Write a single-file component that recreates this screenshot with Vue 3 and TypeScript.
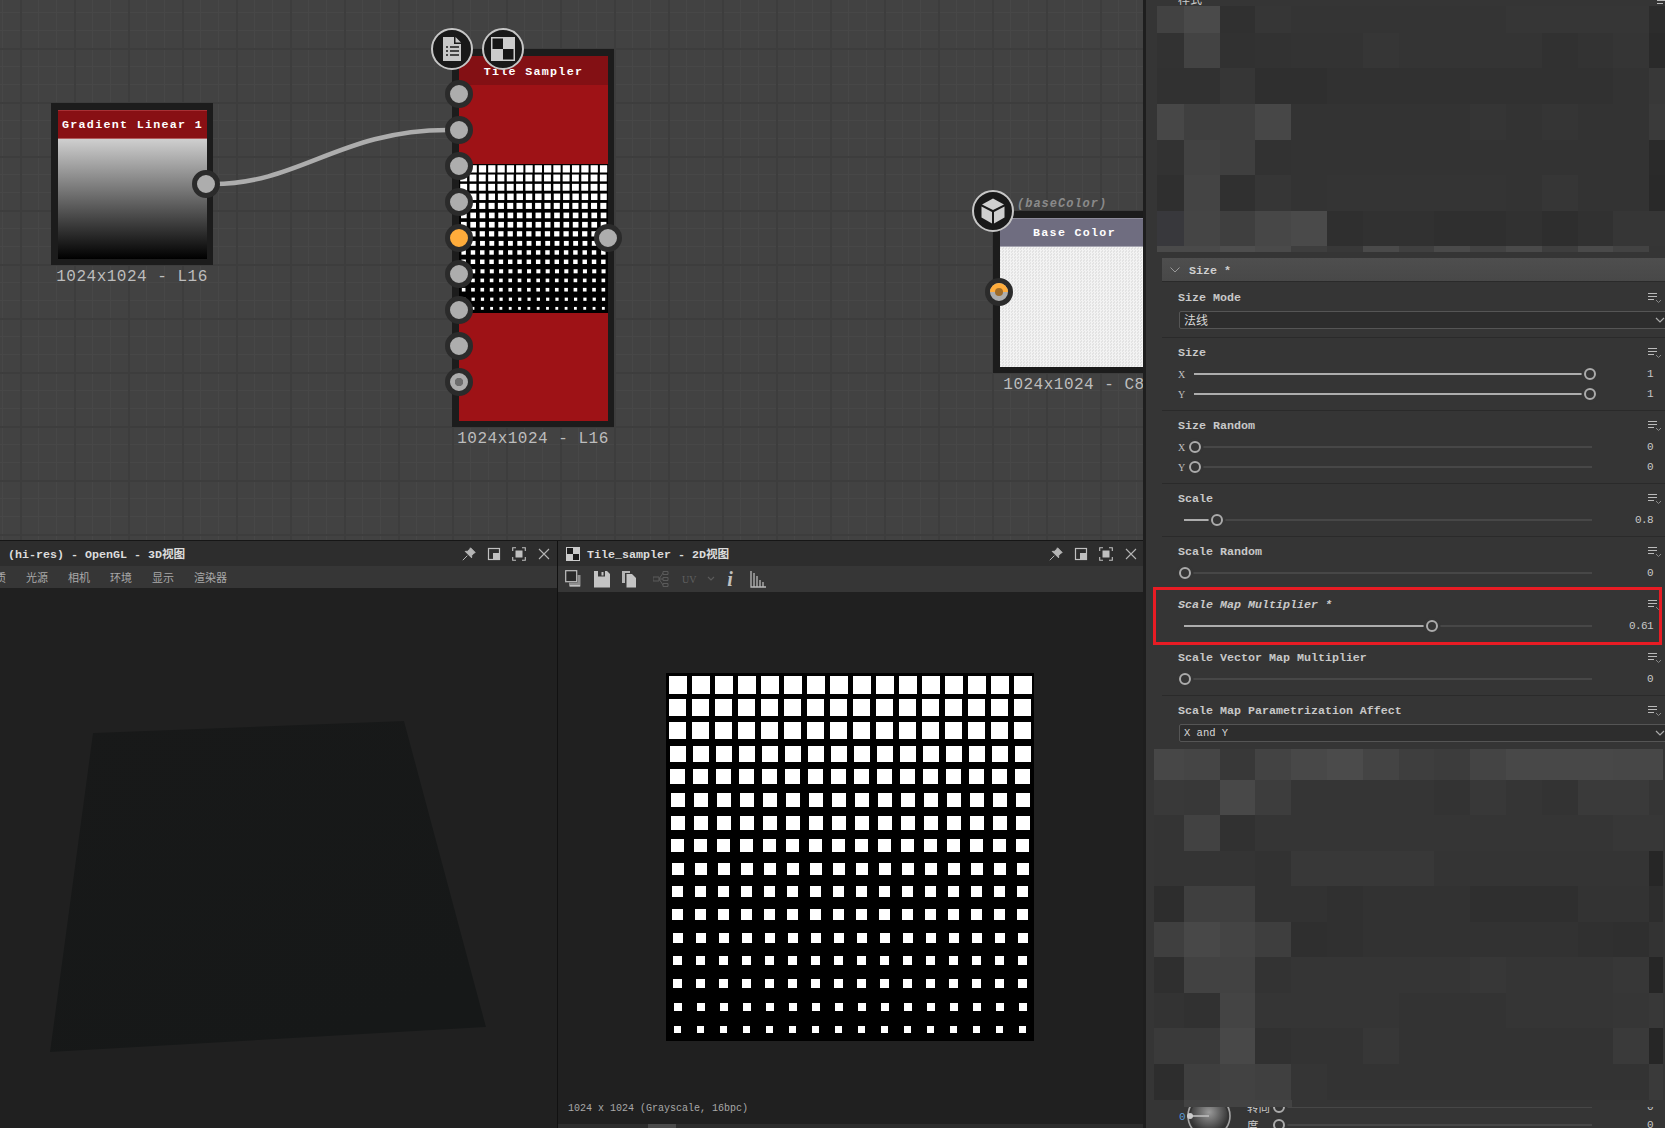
<script setup lang="ts">
interface Tile { x: number; y: number; s: number }
const tiles: Tile[] = []
for (let r = 0; r < 16; r++) {
  const s = Math.round(18 - r * 0.73)
  for (let c = 0; c < 16; c++) {
    tiles.push({ x: Math.round(c * 23 + 11.5 - s / 2), y: Math.round(r * 23 + 11.5 - s / 2), s })
  }
}

const pinYs = [45, 81, 117, 153, 189, 225, 261, 297, 333]

type Ctl =
  | { kind: 'drop'; text: string }
  | { kind: 'slider'; axis?: string; pct: number; val: string }

interface Group { label: string; italic?: boolean; cls?: string; ctl: Ctl[]; boxed?: boolean }

const groups: Group[] = [
  { label: 'Size Mode', cls: 'g-drop', ctl: [{ kind: 'drop', text: '法线' }] },
  { label: 'Size', ctl: [{ kind: 'slider', axis: 'X', pct: 100, val: '1' }, { kind: 'slider', axis: 'Y', pct: 100, val: '1' }] },
  { label: 'Size Random', ctl: [{ kind: 'slider', axis: 'X', pct: 0, val: '0' }, { kind: 'slider', axis: 'Y', pct: 0, val: '0' }] },
  { label: 'Scale', ctl: [{ kind: 'slider', pct: 8, val: '0.8' }] },
  { label: 'Scale Random', cls: 'g-open', ctl: [{ kind: 'slider', pct: 0, val: '0' }] },
  { label: 'Scale Map Multiplier *', italic: true, cls: 'g-open', boxed: true, ctl: [{ kind: 'slider', pct: 61, val: '0.61' }] },
  { label: 'Scale Vector Map Multiplier', ctl: [{ kind: 'slider', pct: 0, val: '0' }] },
  { label: 'Scale Map Parametrization Affect', cls: 'g-last', ctl: [{ kind: 'drop', text: 'X and Y' }] }
]

const m1Rows: string[][] = [
  ['#424242', '#4a4a4a', '#303030', '#363636', '#343434', '#343434', '#343434', '#343434', '#343434', '#343434', '#363636', '#363636', '#363636', '#363636', '#2c2c2c'],
  ['#323232', '#434343', '#313131', '#323232', '#333333', '#333333', '#363636', '#343434', '#343434', '#343434', '#343434', '#313131', '#333333', '#353535', '#2a2a2a'],
  ['#313131', '#313131', '#363636', '#2f2f2f', '#2f2f2f', '#313131', '#313131', '#313131', '#313131', '#313131', '#313131', '#313131', '#313131', '#333333', '#383838'],
  ['#474747', '#3f3f3f', '#3f3f3f', '#474747', '#333333', '#333333', '#333333', '#333333', '#333333', '#353535', '#333333', '#353535', '#333333', '#333333', '#3a3a3a'],
  ['#323232', '#424242', '#3f3f3f', '#323232', '#333333', '#333333', '#333333', '#333333', '#333333', '#333333', '#333333', '#333333', '#333333', '#333333', '#2a2a2a'],
  ['#2f2f2f', '#444444', '#303030', '#363636', '#333333', '#343434', '#343434', '#343434', '#343434', '#343434', '#333333', '#363636', '#333333', '#333333', '#292929'],
  ['#38383c', '#454545', '#3f3f3f', '#474747', '#4a4a4a', '#2f2f2f', '#313131', '#313131', '#2f2f2f', '#2f2f2f', '#313131', '#2e2e2e', '#313131', '#363636', '#363636'],
  ['#4a4a4a', '#4a4a4a', '#4e4e4e', '#4a4a4a', '#3e3e3e', '#383838', '#4a4a4a', '#404040', '#4a4a4a', '#434343', '#4a4a4a', '#3e3e3e', '#4a4a4a', '#434343', '#353535']
]

const m2Rows: string[][] = [
  ['#474747', '#454545', '#383838', '#434343', '#484848', '#4b4b4b', '#444444', '#3e3e3e', '#3c3c3c', '#444444', '#484848', '#484848', '#484848', '#474747', '#474747'],
  ['#393939', '#383838', '#484848', '#3d3d3d', '#353535', '#353535', '#353535', '#353535', '#333333', '#383838', '#353535', '#333333', '#3a3a3a', '#3a3a3a', '#353535'],
  ['#343434', '#424242', '#313131', '#353535', '#353535', '#353535', '#353535', '#353535', '#353535', '#353535', '#353535', '#353535', '#353535', '#373737', '#373737'],
  ['#343434', '#343434', '#343434', '#323232', '#383838', '#383838', '#383838', '#383838', '#343434', '#343434', '#343434', '#343434', '#343434', '#343434', '#262626'],
  ['#2d2d2d', '#3f3f3f', '#3f3f3f', '#323232', '#323232', '#303030', '#323232', '#323232', '#323232', '#2f2f2f', '#2f2f2f', '#2f2f2f', '#333333', '#333333', '#2d2d2d'],
  ['#3f3f3f', '#484848', '#444444', '#3e3e3e', '#2f2f2f', '#303030', '#323232', '#323232', '#323232', '#323232', '#323232', '#323232', '#303030', '#2f2f2f', '#333333'],
  ['#2f2f2f', '#424242', '#424242', '#333333', '#353535', '#353535', '#353535', '#353535', '#353535', '#373737', '#353535', '#353535', '#353535', '#373737', '#262626'],
  ['#333333', '#313131', '#444444', '#353535', '#353535', '#353535', '#353535', '#333333', '#333333', '#333333', '#353535', '#353535', '#353535', '#363636', '#383838'],
  ['#3a3a3a', '#3a3a3a', '#484848', '#313131', '#333333', '#333333', '#373737', '#333333', '#333333', '#333333', '#333333', '#333333', '#333333', '#3a3a3a', '#262626'],
  ['#2d2d2d', '#3f3f3f', '#424242', '#404040', '#353535', '#333333', '#333333', '#333333', '#333333', '#333333', '#333333', '#333333', '#333333', '#333333', '#3a3a3a']
]

const flat = (rows: string[][]): string[] => rows.reduce<string[]>((a, r) => a.concat(r), [])
const m1 = flat(m1Rows)
const m2 = flat(m2Rows)
</script>

<template>
  <div class="app">
    <div class="left">
      <div class="graph">
        <svg class="wire" width="1143" height="540" viewBox="0 0 1143 540">
          <path d="M213 184 C 300 184, 340 130, 448 130" fill="none" stroke="#adadad" stroke-width="4.5" />
        </svg>

        <div class="node n-grad">
          <div class="box">
            <div class="head head-red">Gradient Linear 1</div>
            <div class="body body-grad"></div>
          </div>
          <div class="caption">1024x1024 - L16</div>
          <span class="pin out-grad"></span>
        </div>

        <div class="node n-tile">
          <div class="box">
            <div class="head head-dark">Tile Sampler</div>
            <div class="red r-top"></div>
            <svg class="tile-small" viewBox="0 0 368 368" preserveAspectRatio="none">
              <rect width="368" height="368" fill="#000" />
              <rect v-for="(t, i) in tiles" :key="i" :x="t.x" :y="t.y" :width="t.s" :height="t.s" fill="#fff" />
            </svg>
            <div class="red r-bot"></div>
          </div>
          <div class="caption">1024x1024 - L16</div>
          <span
            v-for="(y, i) in pinYs"
            :key="i"
            class="pin in-pin"
            :class="{ orange: i === 4, dotted: i === 8 }"
            :style="{ top: y + 'px' }"
          ></span>
          <span class="pin out-tile"></span>
          <span class="badge b-doc">
            <svg width="24" height="26" viewBox="0 0 24 26">
              <path d="M3 1 H14 V8 H21 V25 H3 Z" fill="#c8c8c8" />
              <path d="M15.5 1 L21 6.6 H15.5 Z" fill="#c8c8c8" />
              <path d="M6 11 H8 M10 11 H19 M6 15 H8 M10 15 H19 M6 19 H8 M10 19 H19" stroke="#1a1a1a" stroke-width="1.6" />
            </svg>
          </span>
          <span class="badge b-check">
            <svg width="24" height="24" viewBox="0 0 24 24">
              <rect width="24" height="24" fill="#cccccc" />
              <rect x="1.5" y="1.5" width="10.5" height="10.5" fill="#161616" />
              <rect x="12" y="12" width="10.5" height="10.5" fill="#161616" />
            </svg>
          </span>
        </div>

        <div class="node n-base">
          <div class="box">
            <div class="head head-base">Base Color</div>
            <div class="body body-base"></div>
          </div>
          <div class="caption">1024x1024 - C8</div>
          <span class="io-label">(baseColor)</span>
          <span class="pin in-base"><i class="half"></i><i class="core"></i></span>
          <span class="badge b-cube">
            <svg width="26" height="28" viewBox="0 0 26 28">
              <path d="M13 1.5 L24 7.5 L13 13 L2 7.5 Z" fill="#cfcfcf" />
              <path d="M1.5 9.5 L12 15 V26.5 L1.5 20.5 Z" fill="#cfcfcf" />
              <path d="M24.5 9.5 L14 15 V26.5 L24.5 20.5 Z" fill="#cfcfcf" />
            </svg>
          </span>
        </div>
      </div>

      <div class="bottom">
        <section class="view view-3d">
          <header class="title-bar">
            <span class="title t3d">(hi-res) - OpenGL - 3D视图</span>
            <div class="win-btns">
              <svg class="wb" viewBox="0 0 14 14"><path d="M8.5 .8 L13.2 5.5 L11.8 6.2 L9.7 8.6 L9.6 10.8 L3.2 4.4 L5.4 4.3 L7.8 2.2 Z M5.3 8.7 L.8 13.2" fill="#b5b5b5" stroke="#b5b5b5" stroke-width="1" /></svg>
              <svg class="wb" viewBox="0 0 14 14"><rect x="1.5" y="1.5" width="11" height="11" fill="none" stroke="#c0c0c0" stroke-width="1.2" /><rect x="6" y="6" width="6.5" height="6.5" fill="#c0c0c0" /></svg>
              <svg class="wb" viewBox="0 0 14 14"><path d="M.7 4 V.7 H4 M10 .7 H13.3 V4 M13.3 10 V13.3 H10 M4 13.3 H.7 V10" fill="none" stroke="#c0c0c0" stroke-width="1.1" /><rect x="3.5" y="3.5" width="7" height="7" fill="#c0c0c0" /></svg>
              <svg class="wb" viewBox="0 0 14 14"><path d="M2 2 L12 12 M12 2 L2 12" stroke="#b5b5b5" stroke-width="1.1" /></svg>
            </div>
          </header>
          <nav class="menu">
            <span>质</span><span>光源</span><span>相机</span><span>环境</span><span>显示</span><span>渲染器</span>
          </nav>
          <div class="stage">
            <svg width="557" height="536" viewBox="0 0 557 536">
              <defs>
                <linearGradient id="quad" x1="0" y1="0" x2="0.6" y2="1">
                  <stop offset="0" stop-color="#181919" />
                  <stop offset="1" stop-color="#161818" />
                </linearGradient>
              </defs>
              <polygon points="93,145 404,133 486,439 50,464" fill="url(#quad)" />
            </svg>
          </div>
        </section>

        <section class="view view-2d">
          <header class="title-bar">
            <svg class="t-icon" width="14" height="14" viewBox="0 0 14 14">
              <rect width="14" height="14" fill="#cccccc" />
              <rect x="1" y="1" width="6" height="6" fill="#1c1c1c" />
              <rect x="7" y="7" width="6" height="6" fill="#1c1c1c" />
            </svg>
            <span class="title">Tile_sampler - 2D视图</span>
            <div class="win-btns w2">
              <svg class="wb" viewBox="0 0 14 14"><path d="M8.5 .8 L13.2 5.5 L11.8 6.2 L9.7 8.6 L9.6 10.8 L3.2 4.4 L5.4 4.3 L7.8 2.2 Z M5.3 8.7 L.8 13.2" fill="#b5b5b5" stroke="#b5b5b5" stroke-width="1" /></svg>
              <svg class="wb" viewBox="0 0 14 14"><rect x="1.5" y="1.5" width="11" height="11" fill="none" stroke="#c0c0c0" stroke-width="1.2" /><rect x="6" y="6" width="6.5" height="6.5" fill="#c0c0c0" /></svg>
              <svg class="wb" viewBox="0 0 14 14"><path d="M.7 4 V.7 H4 M10 .7 H13.3 V4 M13.3 10 V13.3 H10 M4 13.3 H.7 V10" fill="none" stroke="#c0c0c0" stroke-width="1.1" /><rect x="3.5" y="3.5" width="7" height="7" fill="#c0c0c0" /></svg>
              <svg class="wb" viewBox="0 0 14 14"><path d="M2 2 L12 12 M12 2 L2 12" stroke="#b5b5b5" stroke-width="1.1" /></svg>
            </div>
          </header>
          <div class="tools">
            <svg class="ti" viewBox="0 0 16 18"><rect x=".7" y=".7" width="11" height="11" fill="#2a2a2a" stroke="#c0c0c0" stroke-width="1.2" /><path d="M12.5 5 H15.5 V16.5 H4 V12.5 H12.5 Z" fill="#8e8e8e" /><path d="M5 15 H15 V16.5 H5 Z" fill="#c0c0c0" /></svg>
            <svg class="ti" viewBox="0 0 16 18"><path d="M0 1 H13 L16 4 V17.5 H0 Z" fill="#c4c4c4" /><rect x="4" y="1" width="7" height="5.5" fill="#363636" /><rect x="7.5" y="2" width="2" height="3.5" fill="#c4c4c4" /></svg>
            <svg class="ti" viewBox="0 0 16 18"><path d="M0 1 H8 V3 H3 V13 H0 Z" fill="#b4b4b4" /><path d="M4.5 4 H10 L14 8 V17.5 H4.5 Z" fill="#c4c4c4" /></svg>
            <svg class="ti dim" viewBox="0 0 16 18"><path d="M0 7 H6 V11 H0 Z M10 1.5 H15 V4.5 H10 Z M10 7.5 H15 V10.5 H10 Z M10 13.5 H15 V16.5 H10 Z" fill="none" stroke="#5a5a5a" /><path d="M6 9 L10 3 M6 9 H10 M6 9 L10 15" stroke="#5a5a5a" /></svg>
            <span class="uv">UV</span>
            <svg class="chev" width="10" height="18" viewBox="0 0 10 18"><path d="M2 7 L5 10 L8 7" fill="none" stroke="#5a5a5a" stroke-width="1.2" /></svg>
            <span class="info">i</span>
            <svg class="ti hist" viewBox="0 0 16 18"><path d="M1 1 V17 H16 M4 3 V17 M7 6 V17 M10 10 V17 M13 12 V17" fill="none" stroke="#b8b8b8" stroke-width="1.3" /></svg>
          </div>
          <div class="canvas2d">
            <svg class="tile-big" width="368" height="368" viewBox="0 0 368 368" shape-rendering="crispEdges">
              <rect width="368" height="368" fill="#000" />
              <rect v-for="(t, i) in tiles" :key="i" :x="t.x" :y="t.y" :width="t.s" :height="t.s" fill="#fff" />
            </svg>
            <div class="status">1024 x 1024 (Grayscale, 16bpc)</div>
          </div>
          <div class="hbar"><span></span></div>
        </section>
      </div>
    </div>

    <aside class="panel">
      <div class="stub">
        <span class="stub-text">样式</span>
        <svg class="menu-ic stub-ic" width="14" height="12" viewBox="0 0 14 12"><path d="M0 1.5 H9 M0 4.5 H9 M0 7.5 H6" stroke="#bbb" /><path d="M8 8 L10.5 10.5 L13 8" fill="none" stroke="#888" /></svg>
      </div>

      <div class="mosaic m-top">
        <i v-for="(c, i) in m1" :key="i" :style="{ background: c }"></i>
      </div>

      <div class="sec-head">
        <svg width="12" height="8" viewBox="0 0 12 8"><path d="M1.5 1.5 L6 6 L10.5 1.5" fill="none" stroke="#999" stroke-width="1" /></svg>
        <span>Size *</span>
      </div>

      <div v-for="g in groups" :key="g.label" class="group" :class="g.cls">
        <div class="g-label">
          <span :class="{ ital: g.italic }">{{ g.label }}</span>
          <svg class="menu-ic" width="14" height="12" viewBox="0 0 14 12"><path d="M0 1.5 H9 M0 4.5 H9 M0 7.5 H6" stroke="#bbb" /><path d="M8 8 L10.5 10.5 L13 8" fill="none" stroke="#888" /></svg>
        </div>
        <template v-for="(c, i) in g.ctl" :key="i">
          <div v-if="c.kind === 'drop'" class="drop">
            <span>{{ c.text }}</span>
            <svg width="10" height="7" viewBox="0 0 10 7"><path d="M1 1 L5 5 L9 1" fill="none" stroke="#aaa" stroke-width="1.2" /></svg>
          </div>
          <div v-else class="slide" :class="{ plain: !c.axis }">
            <span v-if="c.axis" class="axis">{{ c.axis }}</span>
            <div class="track">
              <b class="fill" :style="{ width: c.pct + '%' }"></b>
              <div class="thumb-lane"><em class="thumb" :style="{ left: c.pct + '%' }"></em></div>
            </div>
            <span class="val">{{ c.val }}</span>
          </div>
        </template>
        <div v-if="g.boxed" class="red-box"></div>
      </div>

      <div class="mosaic m-bot">
        <i v-for="(c, i) in m2" :key="i" :style="{ background: c }"></i>
      </div>

      <div class="tail">
        <div class="tail-mask"><i></i><i></i><i></i></div>
        <span class="zero">0</span>
        <svg class="knob" width="52" height="44" viewBox="0 0 52 44">
          <defs>
            <radialGradient id="ball" cx="50%" cy="40%" r="55%">
              <stop offset="0" stop-color="#9a9a9a" />
              <stop offset="1" stop-color="#333333" />
            </radialGradient>
          </defs>
          <circle cx="26" cy="16" r="18.5" fill="url(#ball)" />
          <circle cx="26" cy="16" r="21" fill="none" stroke="#a5a5a5" stroke-width="1.6" />
          <path d="M7 16 H26" stroke="#bdbdbd" stroke-width="1.6" />
          <circle cx="7" cy="16" r="3" fill="#cccccc" />
        </svg>
        <div class="tail-rows">
          <div class="t-row"><span class="t-lab">转向</span><div class="t-track"><em></em></div><span class="val">0</span></div>
          <div class="t-row"><span class="t-lab">度</span><div class="t-track"><em></em></div><span class="val">0</span></div>
        </div>
      </div>
    </aside>
  </div>
</template>

<style scoped>
.app {
  width: 1665px;
  height: 1128px;
  display: flex;
  overflow: hidden;
  background: #1e1e1e;
  font-family: "Liberation Mono", "Noto Sans CJK SC", monospace;
  color: #ccc;
}
.left { width: 1143px; flex: none; display: flex; flex-direction: column; }

.graph {
  height: 540px;
  flex: none;
  position: relative;
  overflow: hidden;
  background-color: #424242;
  background-image:
    linear-gradient(to right, #3d3d3d 2px, transparent 2px),
    linear-gradient(to bottom, #3d3d3d 2px, transparent 2px),
    linear-gradient(to right, #474747 1px, transparent 1px),
    linear-gradient(to bottom, #474747 1px, transparent 1px);
  background-size: 54px 54px, 54px 54px, 18px 18px, 18px 18px;
  background-position: 20px 0, 0 48px, 2px 0, 0 12px;
}
.wire { position: absolute; left: 0; top: 0; }

.node { position: absolute; width: 162px; }
.n-grad { left: 51px; top: 103px; }
.n-tile { left: 452px; top: 49px; }
.n-base { left: 993px; top: 211px; }
.box {
  border: 7px solid #1c1c1c;
  border-right-width: 6px;
  border-bottom-width: 6px;
  display: flex;
  flex-direction: column;
}
.head {
  height: 29px;
  flex: none;
  display: flex;
  align-items: center;
  justify-content: center;
  color: #fff;
  font-size: 11.67px;
  font-weight: 700;
  letter-spacing: 1.3px;
  white-space: nowrap;
}
.head-red { background: #881014; border-top: 1px solid #a83034; border-bottom: 1px solid #b05a5c; box-sizing: border-box; }
.head-dark { background: #831014; padding-top: 3px; box-sizing: border-box; }
.head-base { background: #6f6d80; border-top: 1px solid #8d8c9b; border-bottom: 1px solid #a5a4b0; box-sizing: border-box; padding-top: 1px; }
.body { height: 120px; }
.body-grad { background: linear-gradient(#cfcfcf, #000); }
.body-base {
  background-color: #ececec;
  background-image: repeating-conic-gradient(#f3f3f3 0 25%, #e3e3e3 0 50%);
  background-size: 3px 3px;
}
.red { background: #9e1216; }
.r-top { height: 79px; }
.r-bot { height: 108px; }
.tile-small { display: block; width: 149px; height: 149px; }
.caption {
  text-align: center;
  font-size: 16px;
  letter-spacing: .5px;
  color: #bdbdbd;
  line-height: 20px;
  padding-top: 2px;
  white-space: nowrap;
}
.pin {
  position: absolute;
  width: 18px;
  height: 18px;
  border-radius: 50%;
  background: #adadad;
  border: 5px solid #2b2b2b;
  transform: translate(-50%, -50%);
}
.in-pin { left: 7px; }
.out-grad { left: 155px; top: 81px; }
.out-tile { left: 156px; top: 189px; }
.orange { background: #ffac3b; }
.dotted { background: radial-gradient(circle, #6e6e6e 0 4px, #adadad 4.5px); }
.in-base { left: 6px; top: 81px; overflow: hidden; }
.half { position: absolute; left: 0; right: 0; top: 0; height: 9px; background: #ffac3b; }
.core {
  position: absolute;
  left: 5px;
  top: 5px;
  width: 8px;
  height: 8px;
  border-radius: 50%;
  background: #a06c28;
}
.badge {
  position: absolute;
  width: 38px;
  height: 38px;
  border-radius: 50%;
  background: #191919;
  border: 2.5px solid #c6c6c6;
  display: flex;
  align-items: center;
  justify-content: center;
  transform: translate(-50%, -50%);
}
.b-doc { left: 0; top: 0; }
.b-check { left: 51px; top: 0; }
.b-cube { left: 0; top: 0; }
.io-label {
  position: absolute;
  left: 24px;
  top: -14px;
  font-size: 12px;
  font-style: italic;
  font-weight: 700;
  letter-spacing: 1px;
  color: #8a8a8a;
  white-space: nowrap;
}

.bottom { flex: 1; min-height: 0; display: flex; background: #111; border-top: 1px solid #161616; }
.view { display: flex; flex-direction: column; overflow: hidden; background: #202020; }
.view-3d { width: 557px; flex: none; }
.view-2d { margin-left: 1px; flex: 1; min-width: 0; }
.title-bar {
  height: 25px;
  flex: none;
  background: #2d2d2d;
  display: flex;
  align-items: center;
  padding-left: 8px;
}
.title {
  font-size: 11.67px;
  font-weight: 700;
  color: #dcdcdc;
  white-space: nowrap;
  margin-top: -2px;
}
.t-icon { margin-left: 0; margin-right: 7px; }
.win-btns { margin-left: auto; display: flex; gap: 11px; padding-right: 6px; }
.w2 { padding-right: 5px; }
.wb { width: 14px; height: 14px; display: block; }
.menu {
  height: 22px;
  flex: none;
  background: #363636;
  display: flex;
  align-items: center;
  gap: 20px;
  margin-left: 0;
  padding-left: 0;
  font-family: "Noto Sans CJK SC", sans-serif;
  font-size: 11px;
  color: #a9a9a9;
  overflow: hidden;
}
.menu span:first-child { margin-left: -5px; }
.stage { flex: 1; min-height: 0; }
.stage svg { display: block; }
.tools {
  height: 26px;
  flex: none;
  background: #363636;
  display: flex;
  align-items: center;
  padding-left: 7px;
}
.ti { width: 16px; height: 18px; display: block; flex: none; margin-right: 13px; }
.tools .ti:nth-child(2) { margin-right: 12px; }
.tools .ti:nth-child(3) { margin-right: 15px; }
.uv {
  width: 16px;
  font-size: 10px;
  font-family: "Liberation Serif", serif;
  color: #606060;
  margin-right: 8px;
}
.chev { flex: none; margin-right: 10px; }
.info {
  width: 8px;
  margin-right: 16px;
  font-family: "Liberation Serif", serif;
  font-style: italic;
  font-weight: 700;
  font-size: 20px;
  line-height: 20px;
  color: #c0c0c0;
  text-align: center;
}
.canvas2d {
  flex: 1;
  min-height: 0;
  display: flex;
  flex-direction: column;
  align-items: center;
  padding-top: 81px;
}
.tile-big { display: block; flex: none; margin-right: 2px; }
.status {
  align-self: flex-start;
  margin-top: auto;
  margin-left: 10px;
  margin-bottom: 8px;
  font-size: 10px;
  line-height: 14px;
  color: #a8a8a8;
  white-space: nowrap;
}
.hbar { height: 4px; flex: none; background: #2d2d2d; }
.hbar span { display: block; width: 28px; height: 4px; margin-left: 90px; background: #4a4a4a; }

.panel {
  width: 519px;
  margin-left: 3px;
  flex: none;
  background: #353535;
  overflow: hidden;
  display: flex;
  flex-direction: column;
}
.stub { height: 6px; flex: none; overflow: hidden; position: relative; }
.stub-text {
  position: absolute;
  left: 32px;
  top: -8px;
  font-size: 12px;
  line-height: 14px;
  font-family: "Noto Sans CJK SC", sans-serif;
  color: #ccc;
}
.stub-ic { position: absolute; right: 3px; top: -6px; }
.mosaic { display: grid; flex: none; }
.mosaic i { display: block; }
.m-top {
  margin-left: 11px;
  height: 246px;
  grid-template-columns: 27px 36px 35px 36px 36px 36px 36px 35px 36px 36px 36px 36px 35px 36px 16px;
  grid-template-rows: 27px 35px 36px 36px 35px 36px 35px 6px;
}
.m-bot {
  margin-left: 8px;
  margin-right: 2px;
  height: 351px;
  grid-template-columns: 30px 36px 35px 36px 36px 36px 36px 35px 36px 36px 36px 36px 35px 36px 14px;
  grid-template-rows: 31px 35px 36px 35px 36px 35px 36px 35px 36px 36px;
}
.sec-head {
  margin-top: 6px;
  margin-left: 16px;
  height: 24px;
  flex: none;
  box-sizing: border-box;
  display: flex;
  align-items: center;
  background: linear-gradient(#4e4e4e, #484848);
  border-bottom: 1px solid #2a2a2a;
  font-size: 11.67px;
  font-weight: 700;
  color: #d0d0d0;
}
.sec-head svg { margin-left: 7px; margin-right: 8px; }
.sec-head span { margin-top: 2px; }
.group {
  margin-left: 16px;
  padding: 5px 12px 6px 16px;
  border-bottom: 1px solid #2a2a2a;
  flex: none;
  position: relative;
}
.g-drop { padding-top: 6px; padding-bottom: 8px; }
.g-open { border-bottom: 0; padding-bottom: 7px; }
.g-last { border-bottom: 0; padding-bottom: 7px; }
.g-label {
  height: 18px;
  display: flex;
  align-items: center;
  justify-content: space-between;
  font-size: 11.67px;
  font-weight: 700;
  color: #c8c8c8;
  white-space: nowrap;
}
.g-label > span { margin-top: 1px; }
.ital { font-style: italic; }
.menu-ic { display: block; margin-right: -9px; margin-top: 2px; }
.drop {
  margin-top: 5px;
  margin-left: 1px;
  margin-right: -20px;
  height: 18px;
  box-sizing: border-box;
  border: 1px solid #555;
  border-radius: 2px;
  background: #2d2d2d;
  display: flex;
  align-items: center;
  justify-content: space-between;
  padding: 0 7px 0 4px;
  font-size: 10.5px;
  font-family: "Liberation Mono", "Noto Sans CJK SC", monospace;
  color: #d8d8d8;
}
.g-drop .drop { font-size: 12px; }
.slide { height: 20px; display: flex; align-items: center; }
.g-label + .slide { margin-top: 3px; }
.plain { padding-left: 6px; }
.axis {
  width: 15.5px;
  flex: none;
  font-size: 10px;
  font-family: "Liberation Serif", serif;
  color: #c0c0c0;
}
.track { flex: 1; min-width: 0; height: 2px; background: #474747; position: relative; }
.fill { position: absolute; left: 0; top: 0; height: 2px; background: #adadad; display: block; }
.thumb-lane { position: absolute; left: 1px; right: 2px; top: 1px; height: 0; }
.thumb {
  position: absolute;
  top: 0;
  width: 12px;
  height: 12px;
  box-sizing: border-box;
  border: 2.5px solid #ababab;
  border-radius: 50%;
  background: #353535;
  box-shadow: 0 0 0 2.5px #353535;
  transform: translate(-50%, -50%);
  display: block;
}
.val {
  width: 61px;
  flex: none;
  text-align: right;
  font-size: 11px;
  letter-spacing: -.6px;
  padding-right: 0;
  color: #c8c8c8;
  white-space: nowrap;
}
.red-box {
  position: absolute;
  left: -9px;
  right: 3px;
  top: -3px;
  bottom: -2px;
  border: 3px solid #e81c24;
  pointer-events: none;
}
.tail { height: 28px; flex: none; position: relative; overflow: hidden; display: flex; padding-left: 32px; }
.tail-mask {
  position: absolute;
  left: 0;
  right: 0;
  top: 0;
  height: 7px;
  background: #353535;
  z-index: 2;
  display: flex;
  padding-left: 38px;
}
.tail-mask i { display: block; height: 7px; width: 36px; background: #434343; }
.zero {
  font-size: 11px;
  color: #5b9bd5;
  margin-left: 1px;
  margin-top: 10px;
  width: 5px;
  line-height: 14px;
}
.knob { flex: none; display: block; margin-left: -1px; }
.tail-rows { margin-top: -2px; margin-left: 12px; flex: 1; min-width: 0; padding-right: 12px; }
.t-row { height: 18px; display: flex; align-items: center; }
.t-lab {
  width: 24px;
  flex: none;
  margin-right: 0;
  font-family: "Noto Sans CJK SC", sans-serif;
  font-size: 11.5px;
  color: #c8c8c8;
  white-space: nowrap;
}
.t-track { flex: 1; height: 2px; background: #474747; position: relative; margin-left: 8px; }
.t-track em {
  position: absolute;
  left: -6px;
  top: 1px;
  width: 12px;
  height: 12px;
  box-sizing: border-box;
  border: 2.5px solid #ababab;
  border-radius: 50%;
  background: #353535;
  box-shadow: 0 0 0 2.5px #353535;
  transform: translateY(-50%);
}
</style>

<style>
html, body { margin: 0; background: #1e1e1e; }
</style>
